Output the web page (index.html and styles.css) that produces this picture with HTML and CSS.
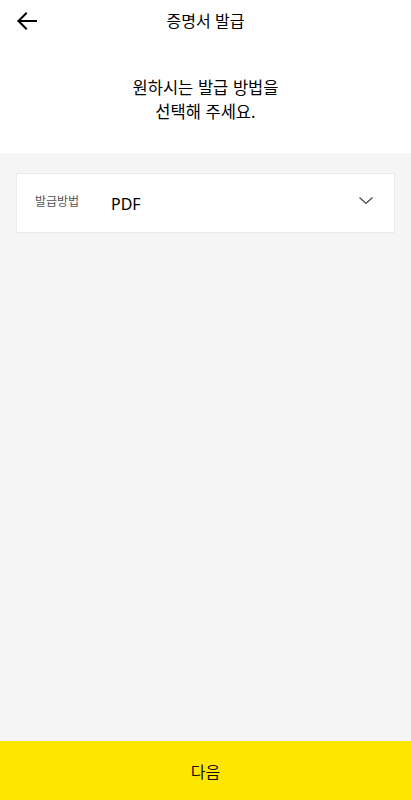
FILE: index.html
```html
<!DOCTYPE html>
<html lang="ko">
<head>
<meta charset="utf-8">
<link rel="stylesheet" href="styles.css">
</head>
<body>
<div class="page">
  <header class="top">
    <div class="bar">
      <button class="back" aria-label="뒤로">
        <svg width="24" height="24" viewBox="0 0 24 24"><path d="M21 12H3.5M11 4.5L3.5 12L11 19.5" fill="none" stroke="#000" stroke-width="2" stroke-linecap="square"/></svg>
      </button>
      <h1 class="title">증명서 발급</h1>
    </div>
    <p class="lead">원하시는 발급 방법을<br>선택해 주세요.</p>
  </header>
  <main class="content">
    <div class="card">
      <span class="label">발급방법</span>
      <span class="value">PDF</span>
      <svg class="chev" width="16" height="10" viewBox="0 0 16 10"><path d="M1.5 1.5L8 7.5L14.5 1.5" fill="none" stroke="#444" stroke-width="1.2"/></svg>
    </div>
  </main>
  <button class="next">다음</button>
</div>
</body>
</html>
```
FILE: styles.css
```css
* { box-sizing: border-box; }
html, body { margin: 0; padding: 0; }
body {
  font-family: "Noto Sans CJK KR", "Noto Sans", sans-serif;
  color: #111;
  background: #f5f5f5;
}
.page {
  display: flex;
  flex-direction: column;
  min-height: 800px;
}
.top {
  background: #fff;
  padding-bottom: 30px;
}
.bar {
  position: relative;
  height: 42px;
  display: flex;
  align-items: center;
  justify-content: center;
}
.back {
  position: absolute;
  left: 14px;
  top: 8px;
  padding: 0;
  border: 0;
  background: none;
  width: 26px;
  height: 26px;
  display: flex;
  align-items: center;
  justify-content: center;
}
.title {
  margin: 0;
  font-size: 16px;
  font-weight: 400;
  line-height: 24px;
  margin-top: -2px;
  color: #000;
}
.lead {
  margin: 33px 0 0;
  text-align: center;
  font-size: 16.5px;
  line-height: 24px;
  font-weight: 400;
  color: #000;
}
.content {
  flex: 1;
  padding: 20px 16px;
}
.card {
  background: #fff;
  border: 1px solid #ebebeb;
  height: 60px;
  display: flex;
  align-items: center;
  padding: 0 20px 0 18px;
}
.label {
  width: 76px;
  font-size: 12px;
  color: #555;
  margin-top: -6px;
}
.value {
  flex: 1;
  font-size: 16px;
  font-family: "Noto Sans", "Noto Sans CJK KR", sans-serif;
  margin-top: 2px;
  color: #000;
}
.chev { margin-top: -4px; }
.next {
  height: 59px;
  border: 0;
  background: #ffe600;
  font-family: inherit;
  font-size: 16px;
  color: #111;
  padding: 0;
}
```
